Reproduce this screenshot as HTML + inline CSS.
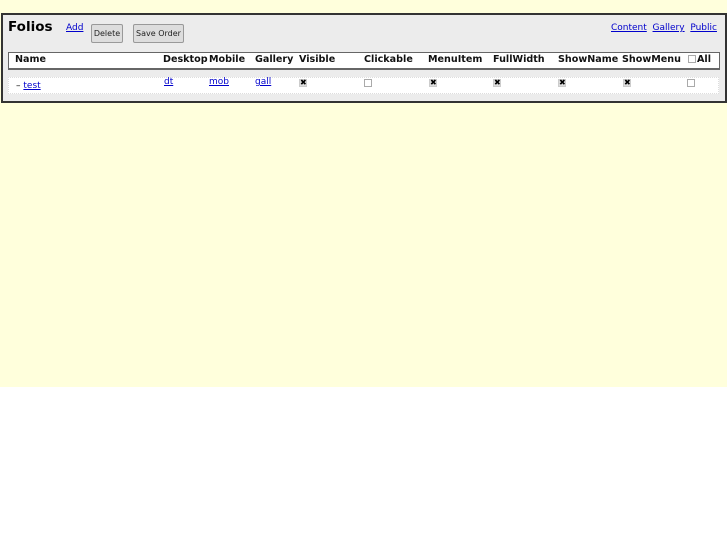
<!DOCTYPE html>
<html><head><style>
*{margin:0;padding:0;box-sizing:border-box}
body{width:727px;height:545px;background:#fff;font-family:"DejaVu Sans","Liberation Sans",sans-serif;position:relative;overflow:hidden}
.bg{position:absolute;left:0;top:0;width:727px;height:387px;background:#ffffdc}
.panel{position:absolute;left:1px;top:13px;width:726px;height:90px;background:#ececec;border:2px solid #333}
.a{position:absolute;white-space:nowrap}
a{color:#00c;text-decoration:underline}
.btn{position:absolute;top:24px;height:19px;background:#ddd;border:1px solid #999;border-radius:2px;font-size:8px;line-height:17px;text-align:center;color:#222;white-space:nowrap}
.hdr{position:absolute;left:8px;top:52px;width:712px;height:18px;background:#fff;border:1px solid #666;border-bottom-width:2px}
.row{position:absolute;left:8px;top:77px;width:711px;height:17px;background:#fff;border:1px dotted #ddd}
.h{position:absolute;top:54px;font-size:9.6px;font-weight:bold;color:#111;white-space:nowrap}
.cb{position:absolute;top:79px;width:8px;height:8px;border:1px solid #aaa;background:#fff;font-size:8px;line-height:6px;text-align:center;font-weight:bold}
.cb.x{background:#ddd;border-color:#ccc}
.l{position:absolute;top:77px;font-size:9px}
</style></head><body>
<div class="bg"></div>
<div class="panel"></div>
<div class="a" style="left:8px;top:19px;font-size:13.5px;font-weight:bold">Folios</div>
<a class="a" style="left:66px;top:23px;font-size:9px">Add</a>
<div class="btn" style="left:91px;width:32px">Delete</div>
<div class="btn" style="left:133px;width:51px">Save Order</div>
<div class="a" style="left:611px;top:23px;font-size:9px"><a>Content</a>&nbsp; <a>Gallery</a>&nbsp; <a>Public</a></div>
<div class="hdr"></div>
<div class="row"></div>
<div class="h" style="left:15px">Name</div>
<div class="h" style="left:163px">Desktop</div>
<div class="h" style="left:209px">Mobile</div>
<div class="h" style="left:255px">Gallery</div>
<div class="h" style="left:299px">Visible</div>
<div class="h" style="left:364px">Clickable</div>
<div class="h" style="left:428px">MenuItem</div>
<div class="h" style="left:493px">FullWidth</div>
<div class="h" style="left:558px">ShowName</div>
<div class="h" style="left:622px">ShowMenu</div>
<div class="cb" style="left:688px;top:55px"></div>
<div class="h" style="left:697px">All</div>
<div class="a" style="left:16px;top:81px;font-size:9px">– <a>test</a></div>
<a class="l" style="left:164px">dt</a>
<a class="l" style="left:209px">mob</a>
<a class="l" style="left:255px">gall</a>
<div class="cb x" style="left:299px">✖</div>
<div class="cb" style="left:364px"></div>
<div class="cb x" style="left:429px">✖</div>
<div class="cb x" style="left:493px">✖</div>
<div class="cb x" style="left:558px">✖</div>
<div class="cb x" style="left:623px">✖</div>
<div class="cb" style="left:687px"></div>
</body></html>
